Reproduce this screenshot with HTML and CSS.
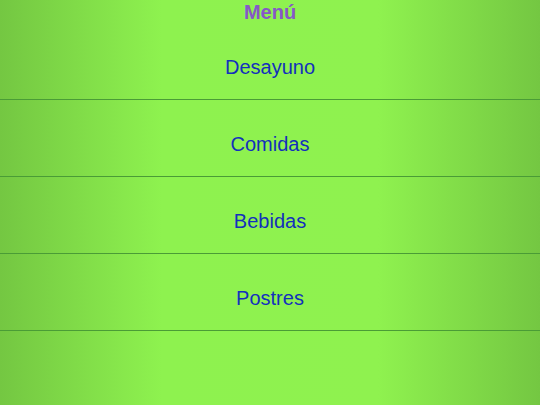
FILE: index.html
```html
<!DOCTYPE html>
<html lang="es">
<head>
  <meta charset="UTF-8" />
  <meta name="viewport" content="width=device-width, initial-scale=1.0"/>
  <title>Menú</title>
  <link rel="stylesheet" href="styles.css">
</head>
<body>

  <!-- Page Heading -->
  <h1>Menú</h1>

  <!-- Menu List -->
  <ul class="menu">
    <li><a href="#">Desayuno</a></li>
    <li><a href="#">Comidas</a></li>
    <li><a href="#">Bebidas</a></li>
    <li><a href="#">Postres</a></li>
  </ul>

</body>
</html>
```

FILE: styles.css
```css
* {
  margin: 0;
  padding: 0;
  box-sizing: border-box;
}

body {
  font-family: 'Liberation Sans', Arial, sans-serif;
  min-height: 405px;
  background: linear-gradient(to right, #74c742 0%, #8ef24f 30%, #8ff24f 70%, #74c742 100%);
}

h1 {
  text-align: center;
  color: #8657c8;
  font-size: 20px;
  line-height: 24px;
  height: 23px;
}

.menu {
  list-style: none;
}

.menu li {
  text-align: center;
  padding: 33px 0 20px;
  border-bottom: 1px solid #4a9c36;
}

.menu li a {
  color: #1330bd;
  text-decoration: none;
  font-size: 20px;
  line-height: 23px;
  display: block;
}
```
